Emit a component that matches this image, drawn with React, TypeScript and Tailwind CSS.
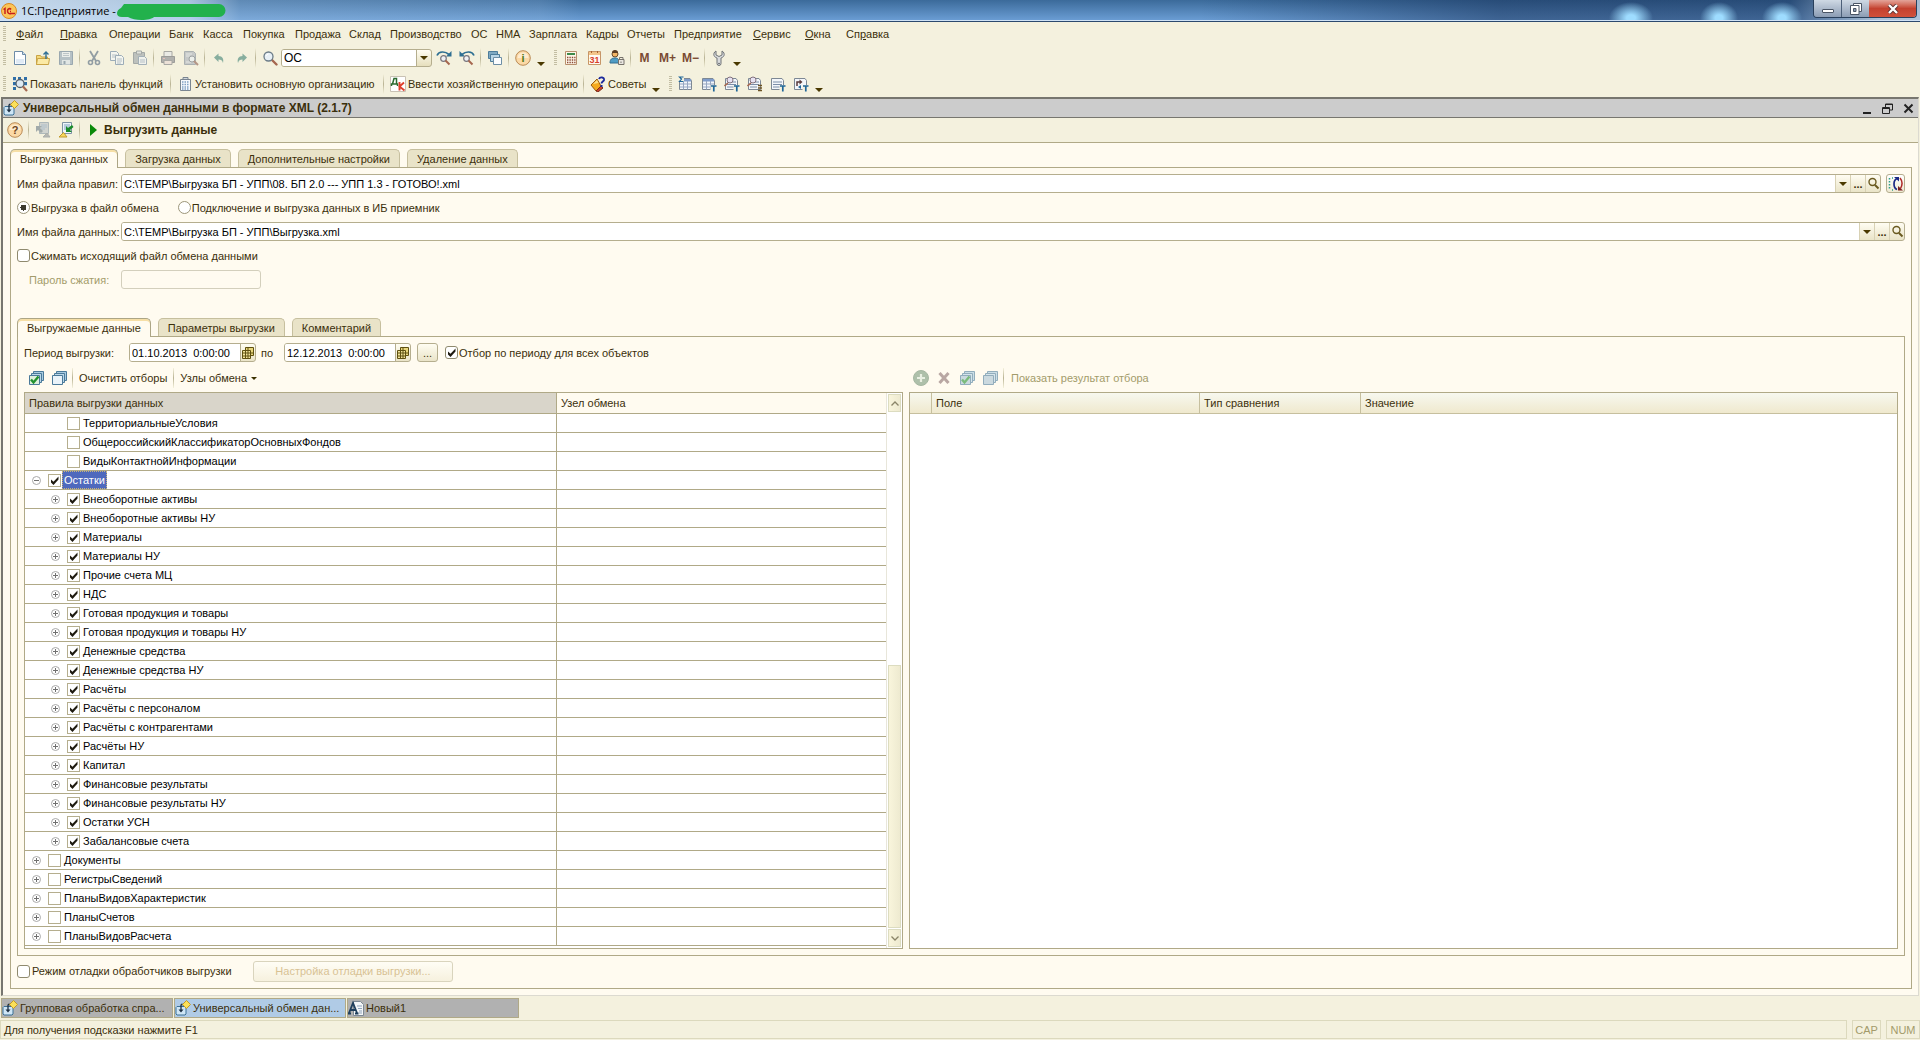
import { useState } from "react"
import type { ReactNode } from "react"

interface TreeRow {
  name: string
  level: number
  checked: boolean
  leaf?: boolean
  open?: boolean
}

const menu = [
  { text: "Файл", key: 0, width: "w-[44px]" },
  { text: "Правка", key: 0, width: "w-[49px]" },
  { text: "Операции", width: "w-[60px]" },
  { text: "Банк", width: "w-[34px]" },
  { text: "Касса", width: "w-[40px]" },
  { text: "Покупка", width: "w-[52px]" },
  { text: "Продажа", width: "w-[54px]" },
  { text: "Склад", width: "w-[41px]" },
  { text: "Производство", width: "w-[81px]" },
  { text: "ОС", width: "w-[25px]" },
  { text: "НМА", width: "w-[33px]" },
  { text: "Зарплата", width: "w-[57px]" },
  { text: "Кадры", width: "w-[41px]" },
  { text: "Отчеты", width: "w-[47px]" },
  { text: "Предприятие", width: "w-[79px]" },
  { text: "Сервис", key: 0, width: "w-[52px]" },
  { text: "Окна", key: 0, width: "w-[41px]" },
  { text: "Справка", key: 2, width: "w-[52px]" },
]

const rules: TreeRow[] = [
  { name: "ТерриториальныеУсловия", level: 1, checked: false, leaf: true },
  { name: "ОбщероссийскийКлассификаторОсновныхФондов", level: 1, checked: false, leaf: true },
  { name: "ВидыКонтактнойИнформации", level: 1, checked: false, leaf: true },
  { name: "Остатки", level: 0, checked: true, open: true },
  { name: "Внеоборотные активы", level: 1, checked: true },
  { name: "Внеоборотные активы НУ", level: 1, checked: true },
  { name: "Материалы", level: 1, checked: true },
  { name: "Материалы НУ", level: 1, checked: true },
  { name: "Прочие счета МЦ", level: 1, checked: true },
  { name: "НДС", level: 1, checked: true },
  { name: "Готовая продукция и товары", level: 1, checked: true },
  { name: "Готовая продукция и товары НУ", level: 1, checked: true },
  { name: "Денежные средства", level: 1, checked: true },
  { name: "Денежные средства НУ", level: 1, checked: true },
  { name: "Расчёты", level: 1, checked: true },
  { name: "Расчёты с персоналом", level: 1, checked: true },
  { name: "Расчёты с контрагентами", level: 1, checked: true },
  { name: "Расчёты НУ", level: 1, checked: true },
  { name: "Капитал", level: 1, checked: true },
  { name: "Финансовые результаты", level: 1, checked: true },
  { name: "Финансовые результаты НУ", level: 1, checked: true },
  { name: "Остатки УСН", level: 1, checked: true },
  { name: "Забалансовые счета", level: 1, checked: true },
  { name: "Документы", level: 0, checked: false },
  { name: "РегистрыСведений", level: 0, checked: false },
  { name: "ПланыВидовХарактеристик", level: 0, checked: false },
  { name: "ПланыСчетов", level: 0, checked: false },
  { name: "ПланыВидовРасчета", level: 0, checked: false },
]

/* ---------- icons ---------- */

function Icon({ children, faded }: { children: ReactNode; faded?: boolean }) {
  return (
    <svg viewBox="0 0 16 16" className={`size-4 shrink-0 ${faded ? "opacity-60" : ""}`} fill="none" aria-hidden="true">
      {children}
    </svg>
  )
}

const NewIcon = () => (
  <Icon>
    <path d="M2.5 1.5h8l3 3v10h-11z" fill="#fdfeff" stroke="#6d8ca8" />
    <path d="M4 9h8v4.5H4z" fill="#dfeaf5" />
    <path d="M10.5 1.5v3h3" fill="#cfe0ee" stroke="#6d8ca8" />
  </Icon>
)

const OpenIcon = () => (
  <Icon>
    <path d="M1.5 14.5v-9h4l1 1.5h6v7.5z" fill="#f4d97c" stroke="#c9a344" />
    <path d="M1.5 14.5l1-6h12l-1 6z" fill="#fbeaa5" stroke="#c9a344" />
    <path d="M11 9V2M8.5 4.5L11 2l2.5 2.5" stroke="#2f6f96" strokeWidth="1.4" />
  </Icon>
)

const SaveIcon = () => (
  <Icon faded>
    <path d="M1.5 1.5h13v13h-13z" fill="#8ea2b6" stroke="#5f7890" />
    <path d="M4 2h8v5H4z" fill="#e6edf3" />
    <path d="M5 3.5h6M5 5.5h6" stroke="#9aa9b8" />
    <path d="M4 10h8v4.5H4z" fill="#d6dfe8" />
    <path d="M5.5 11h2v3h-2z" fill="#5f7890" />
  </Icon>
)

const CutIcon = () => (
  <Icon faded>
    <path d="M4 1l6 10M12 1L6 11" stroke="#51667c" strokeWidth="1.8" />
    <circle cx="4.5" cy="12.5" r="2" stroke="#51667c" strokeWidth="1.6" />
    <circle cx="11.5" cy="12.5" r="2" stroke="#51667c" strokeWidth="1.6" />
  </Icon>
)

const CopyIcon = () => (
  <Icon faded>
    <path d="M1.5 1.5h6l2 2v7h-8z" fill="#f5f8fb" stroke="#6480a0" />
    <path d="M3 5h5M3 7h4" stroke="#8ba0b8" />
    <path d="M6.5 5.5h6l2 2v7h-8z" fill="#f5f8fb" stroke="#6480a0" />
    <path d="M8 9h5M8 11h5M8 13h4" stroke="#8ba0b8" />
  </Icon>
)

const PasteIcon = () => (
  <Icon faded>
    <path d="M1.5 2.5h11v11h-11z" fill="#9aa2a8" stroke="#707a82" />
    <path d="M4.5 1h5v3h-5z" fill="#d5dade" stroke="#707a82" />
    <path d="M6.5 6.5h6l2 2v6h-8z" fill="#eef2f6" stroke="#6f86a0" />
    <path d="M8 10h5M8 12h5" stroke="#8ba0b8" />
  </Icon>
)

const PrintIcon = () => (
  <Icon faded>
    <path d="M4 1.5h8v5H4z" fill="#e4e6ea" stroke="#76787e" />
    <path d="M1.5 6.5h13v6h-13z" fill="#84868e" stroke="#62646c" />
    <path d="M4 10.5h8v4H4z" fill="#e7d8d4" stroke="#76787e" />
    <path d="M3 8.5h2" stroke="#e0a0a0" />
  </Icon>
)

const PreviewIcon = () => (
  <Icon faded>
    <path d="M1.5 1.5h9l2 2v11h-11z" fill="#a8b0bb" stroke="#7c8896" />
    <path d="M3 4h6M3 6h4M3 12h5" stroke="#dde2e8" />
    <circle cx="9" cy="9" r="3" fill="#e8eef4" stroke="#66707c" />
    <path d="M11 11l4 4" stroke="#8a5a4c" strokeWidth="2" />
  </Icon>
)

const UndoIcon = () => (
  <Icon faded>
    <path d="M3 7.5L7.5 3.5V6c4 0 5.5 3 4.5 7-.5-2.5-2-3.5-4.5-3.5V12z" fill="#3f8275" />
  </Icon>
)

const RedoIcon = () => (
  <Icon faded>
    <path d="M13 7.5L8.5 3.5V6C4.5 6 3 9 4 13c.5-2.5 2-3.5 4.5-3.5V12z" fill="#3f8275" />
  </Icon>
)

const SearchIcon = () => (
  <Icon>
    <path d="M10 10l4.5 4.5" stroke="#a5674f" strokeWidth="2.4" strokeLinecap="round" />
    <circle cx="6.5" cy="6.5" r="4.5" fill="#e8f0f6" stroke="#6b7c88" strokeWidth="1.3" />
    <path d="M4 6a3 3 0 012.5-2" stroke="#fff" />
  </Icon>
)

const FindNextIcon = ({ back }: { back?: boolean }) => (
  <Icon>
    <g transform={back ? "matrix(-1 0 0 1 16 0)" : undefined}>
      <path d="M1 5.5C3 1 9 1 13 4.5" stroke="#2e6f92" strokeWidth="1.7" />
      <path d="M15.5 1v5.5H10z" fill="#2e6f92" />
    </g>
    <circle cx="7.5" cy="8.5" r="2.8" fill="#eef0f4" stroke="#77757d" strokeWidth="1.2" />
    <path d="M9.5 10.5l4 4" stroke="#a5674f" strokeWidth="1.9" />
  </Icon>
)

const WindowsIcon = () => (
  <Icon>
    <path d="M1.5 1.5h9v7h-9z" fill="#7fa9c2" stroke="#4d7c9a" />
    <path d="M3.5 4.5h9v7h-9z" fill="#b9d5e6" stroke="#4d7c9a" />
    <path d="M6.5 7.5h8v7h-8z" fill="#fbfdff" stroke="#6d8ea5" />
  </Icon>
)

const BallIcon = ({ sign, green }: { sign: string; green?: boolean }) => (
  <Icon>
    <circle cx="8" cy="8" r="7.3" fill="#fbd9a6" stroke="#b98a55" />
    <path d="M2.5 8a5.5 5.5 0 0111 0z" fill="#fdebcf" />
    <text x="8" y="12" textAnchor="middle" fontSize="11" fontWeight="bold" fill={green ? "#4d7a1c" : "#6b4420"}>
      {sign}
    </text>
  </Icon>
)

const CalcIcon = () => (
  <Icon>
    <path d="M2.5 1.5h11v13h-11z" fill="#fdf6e8" stroke="#b88f6c" />
    <path d="M4 3h8v2H4z" fill="#3d8a4a" />
    <path d="M4 7.5h8.5M4 10h8.5M4 12.5h8.5" stroke="#8b4a35" strokeWidth="1.3" strokeDasharray="1.4 1" />
  </Icon>
)

const CalendarIcon = () => (
  <Icon>
    <path d="M2.5 1.5h12v13h-12z" fill="#fffaf2" stroke="#c79668" />
    <path d="M3 2h11v3H3z" fill="#f3c58a" />
    <path d="M5.5 1v2M11.5 1v2" stroke="#a9622f" />
    <text x="8.5" y="13" textAnchor="middle" fontSize="9" fontWeight="bold" fill="#d8402c">
      31
    </text>
  </Icon>
)

const UserIcon = () => (
  <Icon>
    <circle cx="6" cy="4" r="3" fill="#f2b565" stroke="#6b4a2a" />
    <path d="M3 3a3 3 0 016 0z" fill="#5a3b22" />
    <path d="M1 13c0-4 2-5 5-5s4 1 4 5z" fill="#4f9cc4" stroke="#336f92" />
    <path d="M9.5 9.5H15v5H9.5z" fill="#e9e6e0" stroke="#77736c" />
    <path d="M10.5 9.5v-2H14v2M12 11.5V13" stroke="#77736c" />
  </Icon>
)

const WrenchIcon = () => (
  <Icon>
    <path
      d="M5 1v4l3 1.5L11 5V1c2 1 2.5 3 2 4.5C12.5 7 11 7.5 10 8v5.5a2 2 0 01-4 0V8C5 7.5 3.5 7 3 5.5 2.5 4 3 2 5 1z"
      fill="#d9dbdd"
      stroke="#6f7377"
    />
    <circle cx="8" cy="13.5" r=".8" fill="#55585c" />
  </Icon>
)

const PanelIcon = () => (
  <Icon>
    <path d="M1 1h3v3H1zM1 6h3v3H1zM1 11h3v3H1zM6 1h3v2H6zM12 1h3v3h-3zM12 6h3v3h-3z" fill="#2f6fa8" />
    <path d="M1 4.5h14M1 9.5h14" stroke="#c2d4e4" />
    <circle cx="8" cy="7.5" r="4" fill="#dfeaf3" stroke="#56616c" strokeWidth="1.3" />
    <path d="M11 10.5l4 4.5" stroke="#a5674f" strokeWidth="2.2" />
  </Icon>
)

const OrgIcon = () => (
  <Icon>
    <path d="M3.5 3.5h10v11h-10z" fill="#f6f8fb" stroke="#7a8590" />
    <path d="M6 1.5h5v2H6z" fill="#cfd6dc" stroke="#7a8590" />
    <path d="M5 6h7M5 8.5h7M5 11h7M5 13h7" stroke="#7f9fc4" strokeDasharray="1.5 1" strokeWidth="1.3" />
  </Icon>
)

const DtKtIcon = () => (
  <Icon>
    <path d="M.5.5h15v15H.5z" fill="#fff" stroke="#c9c2b4" />
    <path d="M1.5 10V8h6v2M2.5 8L4 2.5h2.5V8" stroke="#2c6a2f" strokeWidth="1.5" />
    <path d="M9.5 6v8.5M14 6.5l-4.5 4 5 4" stroke="#e0402c" strokeWidth="1.9" />
  </Icon>
)

const TipsIcon = () => (
  <Icon>
    <path d="M1 9l6-6 4 7-5 5z" fill="#f5a91e" stroke="#9a5a12" />
    <path d="M6 15l5-5 2 2-5 4z" fill="#c8442a" stroke="#7c2a16" />
    <path d="M3 8l4-4 1.5 3z" fill="#fde08a" />
    <path d="M9 3c1-2.5 5.5-2 5 1-.3 1.5-2.5 1.5-2.5 3.5" stroke="#1c2a9c" strokeWidth="1.9" />
    <path d="M10.5 9h2v2h-2z" fill="#1c2a9c" />
  </Icon>
)

const ReportIcon = ({ kind }: { kind: "sum" | "table" | "lens" | "lenslist" | "text" | "chart" }) => (
  <Icon>
    <path d="M1.5 2.5H12l1.5 2v9h-12z" fill="#f3f6fa" stroke="#7d8894" />
    {(kind === "sum" || kind === "table") && (
      <>
        <path d="M2 3h11v2.5H2z" fill="#7f9ccb" />
        <path d="M2 8h11M2 11h11M5.5 5v8.5M9.5 5v8.5" stroke="#96a6c2" />
      </>
    )}
    {(kind === "lens" || kind === "lenslist" || kind === "text") && (
      <path d="M3 6h9M3 8.5h9M3 11h7" stroke="#7c8ea8" strokeWidth="1.2" />
    )}
    {(kind === "lens" || kind === "lenslist") && (
      <>
        <path d="M4 7l-3.5 3" stroke="#a5674f" strokeWidth="1.6" />
        <circle cx="6" cy="4" r="3" fill="#e7e2f2" stroke="#82727e" />
      </>
    )}
    {kind === "sum" && (
      <>
        <path d="M0 0h6v6H0z" fill="#f4f1de" />
        <path d="M5.5 1h-4l2 2-2 2.5h4" stroke="#1f6698" strokeWidth="1.2" />
      </>
    )}
    {kind === "chart" && (
      <>
        <path d="M4 10V6h3" stroke="#5a3a3a" strokeWidth="1.5" />
        <path d="M6.5 3.5L9.5 6l-3 2.5z" fill="#5a3a3a" />
        <path d="M8 9l-3 2 3 2z" fill="#1f6698" />
      </>
    )}
    {kind === "lenslist" && <path d="M11 9.5h4M11 12h4M11 14.5h4" stroke="#6d5424" strokeWidth="1.5" />}
    {kind !== "sum" && kind !== "lenslist" && (
      <>
        <path d="M9.5 9H16v7H9.5z" fill="#f4f1de" />
        <path d="M10 10h5.5M12.8 10v5.5" stroke="#1f6698" strokeWidth="1.7" />
      </>
    )}
  </Icon>
)

const ProcessIcon = () => (
  <Icon>
    <path d="M2 6.5h8l1 1V14l-1 1H2l-1-1V7.5z" fill="#cfe6f6" stroke="#3b7196" />
    <path d="M6 4.5V10M6 4.5h3" stroke="#1d2f42" strokeWidth="1.3" />
    <path d="M3.5 9.5h5L6 12.5z" fill="#1d2f42" />
    <path d="M11.5.5l4 4-4 4-4-4z" fill="#fbe05a" stroke="#c49a28" />
  </Icon>
)

const DocIcon = () => (
  <Icon>
    <path d="M5.5 1.5h7l3 3v11h-10z" fill="#f4f6f8" stroke="#7c8894" />
    <path d="M9 6h5M10 8.5h4M11 11h3M11 13h3" stroke="#8fa3bb" />
    <path d="M1 13l4-10 4 10M2.5 10h5M0 13.5h3M7 13.5h3.5" stroke="#1f3e5c" strokeWidth="1.8" />
  </Icon>
)

const TransferIcon = ({ faded }: { faded?: boolean }) => (
  <Icon faded={faded}>
    <path d="M4.5.5h9v11h-9z" fill={faded ? "#b9c0c6" : "#eef4f8"} stroke="#7f93a3" />
    <path d="M6 3h6M6 5h6M6 7h4" stroke="#7fa0c0" />
    {faded ? (
      <path d="M1 4h6L5 6l3 3-2 2-3-3-2 2z" fill="#6b7c88" />
    ) : (
      <path d="M8 10V4l2 2 4-3 1.5 2-3.5 3 2 2z" fill="#198a2a" />
    )}
    <path
      d={faded ? "M8 15l4-4 3 4z" : "M1 15l4.5-4.5L9 15z"}
      fill={faded ? "#8c9298" : "#f8d85e"}
      stroke={faded ? "#7c8288" : "#c09a2c"}
    />
  </Icon>
)

const StackIcon = ({ check, faded }: { check?: boolean; faded?: boolean }) => (
  <Icon faded={faded}>
    <path d="M5.5 1.5h10v9h-10z" fill="#a9cbe0" stroke="#4b7a9a" />
    <path d="M3.5 3.5h10v9h-10z" fill="#bcd8e8" stroke="#4b7a9a" />
    <path d="M1.5 5.5h10v9h-10z" fill={faded ? "#a9c4d4" : check ? "#dff0dc" : "#eaf3f9"} stroke="#4b7a9a" />
    {check && <path d="M3 9.5l2.5 3 5-6" stroke="#23922f" strokeWidth="2.4" />}
  </Icon>
)

const AddIcon = () => (
  <Icon faded>
    <circle cx="8" cy="8" r="7.5" fill="#7a9a7c" stroke="#6b8a6e" />
    <path d="M8 4v8M4 8h8" stroke="#dbe8da" strokeWidth="2.2" />
  </Icon>
)

const DeleteIcon = () => (
  <Icon faded>
    <path d="M3.5 3l9 10M12.5 3l-9 10" stroke="#8c7070" strokeWidth="3" />
  </Icon>
)

const ReloadIcon = () => (
  <Icon>
    <path d="M1.5 2v12M4 2h1M4 14h1" stroke="#2ba08a" strokeDasharray="1.5 1.5" strokeWidth="1.5" />
    <path d="M9 2.5C5 4 5 12 9 13.5" stroke="#1b2a86" strokeWidth="1.7" />
    <path d="M6 1h5v4.500z" fill="#1b2a86" />
    <path d="M12 2c2.5 3 2.5 7 .5 10.5" stroke="#b02a2a" strokeWidth="1.5" />
    <path d="M10 10v4.5h5z" fill="#7a1d1d" />
  </Icon>
)

const LensGlyph = () => (
  <svg viewBox="0 0 13 13" className="size-[13px]" fill="none" aria-hidden="true">
    <circle cx="5.5" cy="5" r="3.5" stroke="#6a5a20" strokeWidth="1.4" />
    <path d="M8 8l3.5 3.5" stroke="#6a5a20" strokeWidth="1.9" />
  </svg>
)

const GridGlyph = () => (
  <svg viewBox="0 0 12 12" className="size-3" fill="none" aria-hidden="true">
    <path d="M3.5.5h8v8h-8z" fill="#e8d67c" stroke="#5f5010" />
    <path d="M.5 3.5h8v8h-8z" fill="#f2e49a" stroke="#5f5010" />
    <path d="M.5 6h11M.5 9h8M3.5 3v8.5M6 1v10.5" stroke="#5f5010" />
  </svg>
)

const Arrow = () => (
  <svg viewBox="0 0 8 4" className="h-1 w-2" aria-hidden="true">
    <path d="M0 0h8L4 4z" fill="#4a3900" />
  </svg>
)

/* ---------- small parts ---------- */

const Grip = () => (
  <span className="mr-[2px] ml-[3px] h-4 w-[3px] shrink-0 bg-[repeating-linear-gradient(to_bottom,#c2bda2_0_1px,transparent_1px_2px)]" />
)

const Sep = () => (
  <span className="mx-[2px] h-5 w-px shrink-0 bg-linear-to-b from-[#f5f2dd] via-[#b9b394] to-[#f5f2dd]" />
)

function Tool({ label, children }: { label: string; children: ReactNode }) {
  return (
    <button type="button" aria-label={label} className="flex h-[22px] w-[23px] shrink-0 items-center justify-center">
      {children}
    </button>
  )
}

const More = () => (
  <button type="button" aria-label="Ещё" className="mr-1 flex h-4 w-[13px] shrink-0 items-end justify-center">
    <Arrow />
  </button>
)

function TextTool({ icon, text, width }: { icon: ReactNode; text: string; width: string }) {
  return (
    <button type="button" className={`flex h-[22px] shrink-0 items-center gap-[2px] pl-1 whitespace-nowrap ${width}`}>
      {icon}
      {text}
    </button>
  )
}

const Tick = () => (
  <svg viewBox="0 0 13 13" className="pointer-events-none absolute inset-0 hidden size-[13px] peer-checked:block" aria-hidden="true">
    <path d="M3 5.5v3L5.500 11l5-5.5v-3L5.5 7.7z" fill="#1e1a10" />
  </svg>
)

function Check({ id, checked, square }: { id: string; checked?: boolean; square?: boolean }) {
  return (
    <span className="relative size-[13px] shrink-0">
      <input
        id={id}
        type="checkbox"
        defaultChecked={checked}
        className={`peer block size-[13px] appearance-none border bg-white ${
          square ? "border-[#b5ae8e]" : "rounded-[3px] border-[#8f8a6e]"
        }`}
      />
      <Tick />
    </span>
  )
}

function Radio({ id, checked, text }: { id: string; checked?: boolean; text: string }) {
  return (
    <label htmlFor={id} className="flex items-center whitespace-nowrap">
      <input
        id={id}
        name="mode"
        type="radio"
        defaultChecked={checked}
        className="mr-px size-[13px] appearance-none rounded-full border border-[#9c967a] bg-white checked:bg-[radial-gradient(#3c3a30_0_3px,white_3px)]"
      />
      {text}
    </label>
  )
}

function Tabs({ items, label }: { items: string[]; label: string }) {
  const [active, setActive] = useState(0)
  return (
    <div role="tablist" aria-label={label} className="relative flex gap-[7px]">
      {items.map((item, i) => (
        <button
          key={item}
          type="button"
          role="tab"
          aria-selected={i === active}
          onClick={() => setActive(i)}
          className={`flex items-center rounded-t-[5px] border-x border-t px-[9px] whitespace-nowrap ${
            i === active
              ? "-mb-px h-[19px] border-[#aca585] bg-[#fffbf0] shadow-[inset_0_2px_0_#f6dfa6]"
              : "h-[18px] border-[#c6bf9e] bg-[#e9e3c8]"
          }`}
        >
          {item}
        </button>
      ))}
    </div>
  )
}

function FieldButtons() {
  const cell = "flex w-[15px] items-center justify-center border-l border-[#d8d1b4] font-bold"
  return (
    <>
      <button type="button" aria-label="Список" className={cell}>
        <Arrow />
      </button>
      <button type="button" aria-label="Выбрать" className={cell}>
        ...
      </button>
      <button type="button" aria-label="Открыть" className={cell}>
        <LensGlyph />
      </button>
    </>
  )
}

const fieldBox = "flex h-[19px] overflow-hidden rounded-[3px] border border-[#b5ae8e] bg-linear-to-b from-[#fffdf2] to-[#eae4c8]"

function DateField({ id, value }: { id: string; value: string }) {
  return (
    <span className={`${fieldBox} w-[127px]`}>
      <input id={id} defaultValue={value} className="min-w-0 flex-1 bg-white pl-[2px] whitespace-pre text-black outline-none" />
      <button type="button" aria-label="Календарь" className="flex w-[15px] items-center justify-center border-l border-[#b5ae8e]">
        <GridGlyph />
      </button>
    </span>
  )
}

function Expander({ open }: { open?: boolean }) {
  return (
    <button type="button" aria-label={open ? "Свернуть" : "Развернуть"} className="mr-[7px] size-[9px] shrink-0">
      <svg viewBox="0 0 9 9" className="size-[9px]" fill="none" aria-hidden="true">
        <circle cx="4.5" cy="4.5" r="4" stroke="#a8a8a8" />
        <path d={open ? "M2 4.5h5" : "M2 4.5h5M4.5 2v5"} stroke="#707070" />
      </svg>
    </button>
  )
}

function ScrollButton({ down }: { down?: boolean }) {
  return (
    <button
      type="button"
      aria-label={down ? "Вниз" : "Вверх"}
      className="flex h-[18px] items-center justify-center border border-[#dcdcc0] bg-linear-to-r from-[#f9f5dc] to-[#eeead0]"
    >
      <svg viewBox="0 0 8 5" className="h-[5px] w-2" fill="none" aria-hidden="true">
        <path d={down ? "M.5.5L4 4 7.5.5" : "M.5 4.5L4 1l3.5 3.5"} stroke="#8a8468" strokeWidth="1.3" />
      </svg>
    </button>
  )
}

/* ---------- page parts ---------- */

function TitleBar() {
  return (
    <header className="flex h-[22px] items-start justify-between border-b border-[#2c4a6e] bg-[radial-gradient(ellipse_22px_16px_at_1631px_18px,#9edcff_20%,transparent),radial-gradient(ellipse_19px_16px_at_1719px_18px,#9edcff_20%,transparent),radial-gradient(ellipse_20px_16px_at_1782px_18px,#9edcff_20%,transparent),linear-gradient(to_right,rgba(222,235,248,.85)_0,rgba(205,224,243,.75)_190px,rgba(160,195,230,.35)_240px,rgba(160,195,230,.2)_540px,transparent_580px,transparent_1200px,rgba(20,45,85,.5)_1500px,rgba(20,45,85,.5)_1790px,rgba(190,205,220,.8)_1880px),linear-gradient(to_bottom,#3b6a9a,#6c9fd6)] shadow-[inset_0_-1px_0_#cfe2f5]">
      <div className="flex h-[21px] items-center gap-1 pl-px font-['Open_Sans','Noto_Sans',sans-serif] text-[11px] text-black">
        <Icon>
          <circle cx="8" cy="8" r="7.5" fill="#fbc55a" stroke="#d98a22" />
          <path d="M2.5 6.5L4 5.5V11M10 6.5C9 5 6.5 5.5 6.5 8s2 3 3.5 2.5h4M10 8.5H9" stroke="#c8201c" strokeWidth="1.5" />
        </Icon>
        <span className="whitespace-nowrap">1С:Предприятие -</span>
        <svg viewBox="0 0 110 18" className="-ml-1 h-[18px] w-[110px]" aria-hidden="true">
          <path d="M8 2h95a6 6 0 010 13H38c-4 4-20 4-26 0H6C-1 15 0 8 5 6z" fill="#22b14c" />
        </svg>
      </div>
      <div className="mr-[3px] flex h-[18px] overflow-hidden rounded-b-[4px] border border-t-0 border-[#29405c]">
        <button type="button" aria-label="Свернуть" className="flex w-7 items-center justify-center border-r border-[#4c5f78] bg-linear-to-b from-[#cfd9e4] to-[#8c9db4]">
          <span className="mt-1 h-1 w-3 rounded-[1px] border border-[#4a5565] bg-white" />
        </button>
        <button type="button" aria-label="Восстановить" className="flex w-[27px] items-center justify-center bg-linear-to-b from-[#cfd9e4] to-[#8c9db4]">
          <svg viewBox="0 0 12 12" className="size-3" fill="none" aria-hidden="true">
            <path d="M3.5.5h8v8h-8z" fill="#fff" stroke="#4a5565" />
            <path d="M.5 2.5H9v9H.5z" fill="#fff" stroke="#4a5565" />
            <path d="M3.5 5.5H6v3H3.500z" fill="#8c9db4" stroke="#4a5565" />
          </svg>
        </button>
        <button type="button" aria-label="Закрыть" className="flex w-[47px] items-center justify-center bg-linear-to-b from-[#e3a49a] via-[#c4412f] to-[#d0503a]">
          <svg viewBox="0 0 12 10" className="h-[10px] w-3" fill="none" aria-hidden="true">
            <path d="M2 1l8 8M10 1L2 9" stroke="#5b3030" strokeWidth="4" />
            <path d="M2 1l8 8M10 1L2 9" stroke="#fff" strokeWidth="2.4" />
          </svg>
        </button>
      </div>
    </header>
  )
}

function MenuBar() {
  return (
    <nav className="flex h-6 items-center">
      <Grip />
      <div className="flex pl-2">
        {menu.map((item) => (
          <button key={item.text} type="button" className={`text-left whitespace-nowrap ${item.width}`}>
            {item.key === undefined ? (
              item.text
            ) : (
              <>
                {item.text.slice(0, item.key)}
                <u>{item.text[item.key]}</u>
                {item.text.slice(item.key + 1)}
              </>
            )}
          </button>
        ))}
      </div>
    </nav>
  )
}

function MainToolbar() {
  const memory = "text-[12px] font-bold text-[#7a4a32]"
  return (
    <div className="flex h-6 items-center">
      <Grip />
      <Tool label="Новый"><NewIcon /></Tool>
      <Tool label="Открыть"><OpenIcon /></Tool>
      <Tool label="Сохранить"><SaveIcon /></Tool>
      <Sep />
      <Tool label="Вырезать"><CutIcon /></Tool>
      <Tool label="Копировать"><CopyIcon /></Tool>
      <Tool label="Вставить"><PasteIcon /></Tool>
      <Sep />
      <Tool label="Печать"><PrintIcon /></Tool>
      <Tool label="Просмотр"><PreviewIcon /></Tool>
      <Sep />
      <Tool label="Отменить"><UndoIcon /></Tool>
      <Tool label="Вернуть"><RedoIcon /></Tool>
      <Sep />
      <Tool label="Найти"><SearchIcon /></Tool>
      <span className="flex h-[18px] w-[151px] overflow-hidden rounded-[3px] border border-[#b5ae8e] bg-linear-to-b from-[#fffdf2] to-[#e6dfbd]">
        <input aria-label="Поиск" defaultValue="ОС" className="min-w-0 flex-1 bg-white pl-[2px] text-[12px] text-black outline-none" />
        <button type="button" aria-label="История поиска" className="flex w-[15px] items-center justify-center border-l border-[#b5ae8e]">
          <Arrow />
        </button>
      </span>
      <Tool label="Найти далее"><FindNextIcon /></Tool>
      <Tool label="Найти назад"><FindNextIcon back /></Tool>
      <Sep />
      <Tool label="Окна"><WindowsIcon /></Tool>
      <Sep />
      <Tool label="Справка"><BallIcon sign="i" green /></Tool>
      <More />
      <Grip />
      <Tool label="Калькулятор"><CalcIcon /></Tool>
      <Tool label="Календарь"><CalendarIcon /></Tool>
      <Tool label="Пользователи"><UserIcon /></Tool>
      <Sep />
      <Tool label="M"><span className={memory}>M</span></Tool>
      <Tool label="M+"><span className={memory}>M+</span></Tool>
      <Tool label="M-"><span className={memory}>M−</span></Tool>
      <Sep />
      <Tool label="Настройка"><WrenchIcon /></Tool>
      <More />
    </div>
  )
}

function ActionToolbar() {
  return (
    <div className="flex h-[27px] items-center">
      <Grip />
      <TextTool icon={<PanelIcon />} text="Показать панель функций" width="w-[160px]" />
      <Sep />
      <TextTool icon={<OrgIcon />} text="Установить основную организацию" width="w-[208px]" />
      <Sep />
      <TextTool icon={<DtKtIcon />} text="Ввести хозяйственную операцию" width="w-[195px]" />
      <Sep />
      <TextTool icon={<TipsIcon />} text="Советы" width="w-[63px]" />
      <More />
      <Grip />
      <Tool label="Обороты"><ReportIcon kind="sum" /></Tool>
      <Tool label="Ведомость"><ReportIcon kind="table" /></Tool>
      <Tool label="Карточка счета"><ReportIcon kind="lens" /></Tool>
      <Tool label="Анализ счета"><ReportIcon kind="lenslist" /></Tool>
      <Tool label="Отчет по проводкам"><ReportIcon kind="text" /></Tool>
      <Tool label="Диаграмма"><ReportIcon kind="chart" /></Tool>
      <More />
    </div>
  )
}

function RulesTable() {
  return (
    <div className="flex border border-[#b0a987] bg-white">
      <table className="w-full flex-1 table-fixed border-separate border-spacing-0 self-start">
        <colgroup>
          <col className="w-[532px]" />
          <col />
        </colgroup>
        <thead>
          <tr className="text-left">
            <th className="border-r border-b border-[#b0a987] bg-[#d9d5ca] p-0 font-normal">
              <div className="flex h-5 items-center pl-1">Правила выгрузки данных</div>
            </th>
            <th className="border-b border-[#b0a987] bg-[#fffbf0] p-0 font-normal">
              <div className="flex h-5 items-center pl-1">Узел обмена</div>
            </th>
          </tr>
        </thead>
        <tbody className="text-black">
          {rules.map((row, i) => (
            <tr key={row.name}>
              <td className="border-r border-b border-[#b0a987] p-0">
                <div className={`flex h-[18px] items-center ${row.leaf ? "pl-[42px]" : row.level === 1 ? "pl-[26px]" : "pl-[7px]"}`}>
                  {!row.leaf && <Expander open={row.open} />}
                  <Check id={`rule-${i}`} checked={row.checked} square />
                  <label
                    htmlFor={`rule-${i}`}
                    className={`ml-px flex h-[18px] items-center border px-px ${
                      row.open ? "border-dotted border-[#c8b47c] bg-[#4f69bd] text-white" : "border-transparent"
                    }`}
                  >
                    {row.name}
                  </label>
                </div>
              </td>
              <td className="border-b border-[#b0a987] p-0" />
            </tr>
          ))}
        </tbody>
      </table>
      <div className="flex w-4 flex-col gap-px border-l border-[#e8e6da] bg-white p-px">
        <ScrollButton />
        <div className="flex flex-1 flex-col justify-end">
          <div className="h-[51%] border border-[#dcdcc0] bg-linear-to-r from-[#f9f5dc] to-[#eeead0]" />
        </div>
        <ScrollButton down />
      </div>
    </div>
  )
}

function FilterTable() {
  const head = "border-r border-b border-[#c6bf9e] p-0 font-normal"
  return (
    <div className="border border-[#b0a987] bg-white">
      <table className="w-full table-fixed border-separate border-spacing-0">
        <colgroup>
          <col className="w-[22px]" />
          <col className="w-[268px]" />
          <col className="w-[161px]" />
          <col />
        </colgroup>
        <thead>
          <tr className="bg-linear-to-b from-[#f7f8ef] to-[#efe8cc] text-left">
            <td className={head} />
            <th className={head}>
              <div className="flex h-5 items-center pl-1">Поле</div>
            </th>
            <th className={head}>
              <div className="flex h-5 items-center pl-1">Тип сравнения</div>
            </th>
            <th className="border-b border-[#c6bf9e] p-0 font-normal">
              <div className="flex h-5 items-center pl-1">Значение</div>
            </th>
          </tr>
        </thead>
      </table>
    </div>
  )
}

function ExportPanel() {
  return (
    <section className="flex flex-1 flex-col border border-[#b0a987] p-[6px]">
      <div className="flex items-center">
        <label htmlFor="from" className="w-[105px]">Период выгрузки:</label>
        <DateField id="from" value="01.10.2013  0:00:00" />
        <label htmlFor="to" className="w-7 pl-[5px]">по</label>
        <DateField id="to" value="12.12.2013  0:00:00" />
        <button type="button" aria-label="Выбрать период" className="mr-[7px] ml-[6px] h-[19px] w-[21px] rounded-[3px] border border-[#b5ae8e] bg-linear-to-b from-[#fffdf2] to-[#eae4c8]">
          ...
        </button>
        <Check id="by-period" checked />
        <label htmlFor="by-period" className="pl-px">Отбор по периоду для всех объектов</label>
      </div>

      <div className="mt-1 grid flex-1 grid-cols-[879fr_989fr] grid-rows-[24px_1fr] gap-x-[6px] gap-y-[2px]">
        <div className="flex items-center">
          <Tool label="Установить флажки"><StackIcon check /></Tool>
          <Tool label="Снять флажки"><StackIcon /></Tool>
          <Sep />
          <button type="button" className="px-1">Очистить отборы</button>
          <Sep />
          <button type="button" className="flex items-center gap-1 px-1">
            Узлы обмена
            <svg viewBox="0 0 6 3" className="h-[3px] w-[6px]" aria-hidden="true">
              <path d="M0 0h6L3 3z" fill="#3a3000" />
            </svg>
          </button>
        </div>
        <div className="flex items-center text-[#a39b6b]">
          <Tool label="Добавить"><AddIcon /></Tool>
          <Tool label="Удалить"><DeleteIcon /></Tool>
          <Tool label="Включить все"><StackIcon check faded /></Tool>
          <Tool label="Выключить все"><StackIcon faded /></Tool>
          <Sep />
          <button type="button" className="px-[5px]">Показать результат отбора</button>
        </div>
        <RulesTable />
        <FilterTable />
      </div>
    </section>
  )
}

function ExchangeWindow() {
  return (
    <main className="mx-px flex flex-1 flex-col border-t-2 border-r border-l-2 border-b border-t-[#77766f] border-r-[#dcdad0] border-b-[#dcdad0] border-l-[#77766f] bg-[#fffbf0]">
      <div className="flex h-[19px] shrink-0 items-center justify-between border-b border-[#77766f] bg-[#cccccc] pr-1">
        <h1 className="flex items-center gap-1 text-[12px] font-bold">
          <ProcessIcon />
          Универсальный обмен данными в формате XML (2.1.7)
        </h1>
        <div className="flex gap-[10px]">
          <button type="button" aria-label="Свернуть окно">
            <svg viewBox="0 0 11 11" className="size-[11px]" aria-hidden="true"><path d="M2 9h8v2H2z" fill="#222" /></svg>
          </button>
          <button type="button" aria-label="Восстановить окно">
            <svg viewBox="0 0 11 11" className="size-[11px]" fill="none" aria-hidden="true">
              <path d="M3.5 4V1h7v6H8M3 1.5h8M.5 4.5h7v6h-7zM0 5.5h8" stroke="#222" />
            </svg>
          </button>
          <button type="button" aria-label="Закрыть окно">
            <svg viewBox="0 0 11 11" className="size-[11px]" fill="none" aria-hidden="true">
              <path d="M1.5 1.5l8 8M9.5 1.5l-8 8" stroke="#222" strokeWidth="2" />
            </svg>
          </button>
        </div>
      </div>

      <div className="flex h-[25px] shrink-0 items-center border-b border-[#b0a987] bg-[#f4f1de]">
        <Tool label="Справка"><BallIcon sign="?" /></Tool>
        <Sep />
        <Tool label="Сохранить настройки"><TransferIcon faded /></Tool>
        <Tool label="Загрузить настройки"><TransferIcon /></Tool>
        <Sep />
        <button type="button" className="flex items-center gap-[7px] pl-2 text-[12px] font-bold">
          <svg viewBox="0 0 7 12" className="h-3 w-[7px]" aria-hidden="true"><path d="M0 0l7 6-7 6z" fill="#0a8a0a" /></svg>
          Выгрузить данные
        </button>
      </div>

      <div className="flex flex-1 flex-col py-[6px] pr-[6px] pl-[7px]">
        <Tabs label="Режим" items={["Выгрузка данных", "Загрузка данных", "Дополнительные настройки", "Удаление данных"]} />
        <div className="flex flex-1 flex-col border border-[#b0a987] px-[6px] pt-[6px]">
          <div className="grid auto-rows-[19px] gap-[5px]">
            <div className="flex items-center">
              <label htmlFor="rules-file" className="w-[104px] shrink-0">Имя файла правил:</label>
              <span className={`${fieldBox} flex-1`}>
                <input id="rules-file" defaultValue="C:\TEMP\Выгрузка БП - УПП\08. БП 2.0 --- УПП 1.3 - ГОТОВО!.xml" className="min-w-0 flex-1 bg-white pl-[2px] text-black outline-none" />
                <FieldButtons />
              </span>
              <button type="button" aria-label="Перечитать правила" className="ml-[5px] flex h-[19px] w-[19px] items-center justify-center rounded-[3px] border border-[#b5ae8e] bg-linear-to-b from-white to-[#efe9d2]">
                <ReloadIcon />
              </button>
            </div>
            <div className="flex items-center gap-[19px]">
              <Radio id="to-file" checked text="Выгрузка в файл обмена" />
              <Radio id="to-base" text="Подключение и выгрузка данных в ИБ приемник" />
            </div>
            <div className="flex items-center">
              <label htmlFor="data-file" className="w-[104px] shrink-0">Имя файла данных:</label>
              <span className={`${fieldBox} flex-1`}>
                <input id="data-file" defaultValue="C:\TEMP\Выгрузка БП - УПП\Выгрузка.xml" className="min-w-0 flex-1 bg-white pl-[2px] text-black outline-none" />
                <FieldButtons />
              </span>
            </div>
            <div className="flex items-center">
              <Check id="compress" />
              <label htmlFor="compress" className="pl-px">Сжимать исходящий файл обмена данными</label>
            </div>
            <div className="flex items-center">
              <label htmlFor="password" className="w-[104px] pl-3 text-[#a39b6b]">Пароль сжатия:</label>
              <input id="password" type="password" disabled className="h-[19px] w-[140px] rounded-[3px] border border-[#d3cfbc] bg-[#fffbf0]" />
            </div>
          </div>

          <div className="mt-[29px] flex flex-1 flex-col">
            <Tabs label="Разделы выгрузки" items={["Выгружаемые данные", "Параметры выгрузки", "Комментарий"]} />
            <ExportPanel />
          </div>

          <div className="flex h-8 items-center pb-[2px]">
            <Check id="debug" />
            <label htmlFor="debug" className="w-[223px] pl-[2px]">Режим отладки обработчиков выгрузки</label>
            <button type="button" disabled className="h-[21px] w-[200px] rounded-[3px] border border-[#d9d4bd] bg-linear-to-b from-[#fffdf5] to-[#f6f1de] text-[#d8c294]">
              Настройка отладки выгрузки...
            </button>
          </div>
        </div>
      </div>
    </main>
  )
}

function TaskBar() {
  const item = "flex h-5 w-[172px] items-center gap-[2px] border border-[#b0a987] whitespace-nowrap"
  return (
    <div className="flex gap-px px-px py-[2px]">
      <button type="button" className={`${item} bg-[#b1b1b1]`}>
        <ProcessIcon />
        Групповая обработка спра...
      </button>
      <button type="button" className={`${item} bg-[#b0cbe6]`}>
        <ProcessIcon />
        Универсальный обмен дан...
      </button>
      <button type="button" className={`${item} bg-[#b1b1b1]`}>
        <DocIcon />
        Новый1
      </button>
    </div>
  )
}

export default function App() {
  return (
    <div className="flex min-h-screen flex-col bg-[#f4f1de] font-['Liberation_Sans',Arial,sans-serif] text-[11px] leading-[14px] text-[#3b2f0b]">
      <TitleBar />
      <MenuBar />
      <MainToolbar />
      <ActionToolbar />
      <ExchangeWindow />
      <TaskBar />
      <footer className="flex h-5 gap-[5px] pb-px">
        <div className="flex flex-1 items-center border border-[#dcd9bd] pl-[3px]">Для получения подсказки нажмите F1</div>
        <div className="flex w-[29px] items-center justify-center border border-[#dcd9bd] text-[#a39b6b]">CAP</div>
        <div className="flex w-[34px] items-center justify-center border border-[#dcd9bd] text-[#a39b6b]">NUM</div>
      </footer>
    </div>
  )
}
